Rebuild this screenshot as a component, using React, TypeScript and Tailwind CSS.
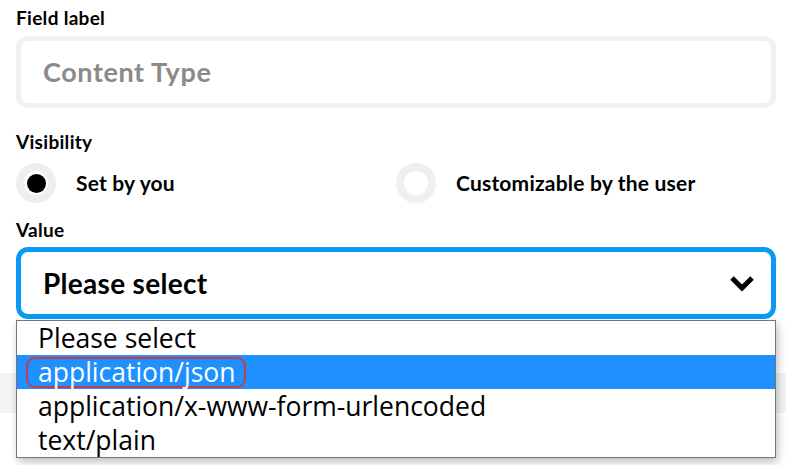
import React from "react";

const options = [
  "Please select",
  "application/json",
  "application/x-www-form-urlencoded",
  "text/plain",
];

function Radio({ checked, label }: { checked: boolean; label: string }) {
  return (
    <div className="flex items-center gap-[20px]">
      <span className="flex h-[40px] w-[40px] items-center justify-center rounded-full border-[8px] border-[#efefef] bg-white">
        {checked && <span className="h-[19px] w-[19px] rounded-full bg-black" />}
      </span>
      <span className="text-[21px] font-bold tracking-[0.2px]">{label}</span>
    </div>
  );
}

export default function App() {
  const selected = 1;

  return (
    <div className="relative h-[465px] w-[786px] overflow-hidden bg-white font-['Lato',sans-serif] text-black">
      <div className="pl-4 pr-[10px]">
        <div className="pt-[8px] text-[19px] font-bold leading-[20px] tracking-[0.3px]">Field label</div>
        <div className="mt-[8px] flex h-[72px] items-center rounded-[12px] border-[5px] border-[#f1f1f1] px-[22px] text-[27px] font-bold tracking-[0.6px] text-[#8a8a8a]">
          Content Type
        </div>

        <div className="mt-[24px] text-[19px] font-bold leading-[20px] tracking-[0.3px]">Visibility</div>
        <div className="mt-[11px] grid h-[40px] grid-cols-2">
          <Radio checked label="Set by you" />
          <Radio checked={false} label="Customizable by the user" />
        </div>

        <div className="mt-[17px] text-[19px] font-bold leading-[20px] tracking-[0.3px]">Value</div>
        <div className="mt-[7px] flex h-[72px] items-center justify-between rounded-[12px] border-[5px] border-[#0a9af5] pl-[22px] pr-[16px]">
          <span className="text-[28px] font-bold tracking-[0.3px]">Please select</span>
          <svg width="26" height="17" viewBox="0 0 26 17" fill="none">
            <path d="M3 3 L13 13 L23 3" stroke="#000" strokeWidth="5" strokeLinejoin="miter" />
          </svg>
        </div>
      </div>

      <div className="mt-[54px] h-[40px] bg-[#f4f4f4]" />

      <ul className="absolute left-[16px] top-[320px] w-[760px] border border-[#767676] bg-white font-['Open_Sans',sans-serif] text-[26.5px] leading-[34px] shadow-[2px_4px_8px_rgba(0,0,0,0.25)]">
        {options.map((o, i) => (
          <li
            key={o}
            className={
              i === selected
                ? "flex h-[34px] items-center bg-[#1e90ff] pl-[21px] text-white"
                : "flex h-[34px] items-center pl-[21px]"
            }
          >
            {i === selected ? (
              <span className="-ml-[12px] flex h-[31px] items-center rounded-[9px] border-2 border-[#c63a4a] pl-[10px] pr-[8px]">
                {o}
              </span>
            ) : (
              o
            )}
          </li>
        ))}
      </ul>
    </div>
  );
}
